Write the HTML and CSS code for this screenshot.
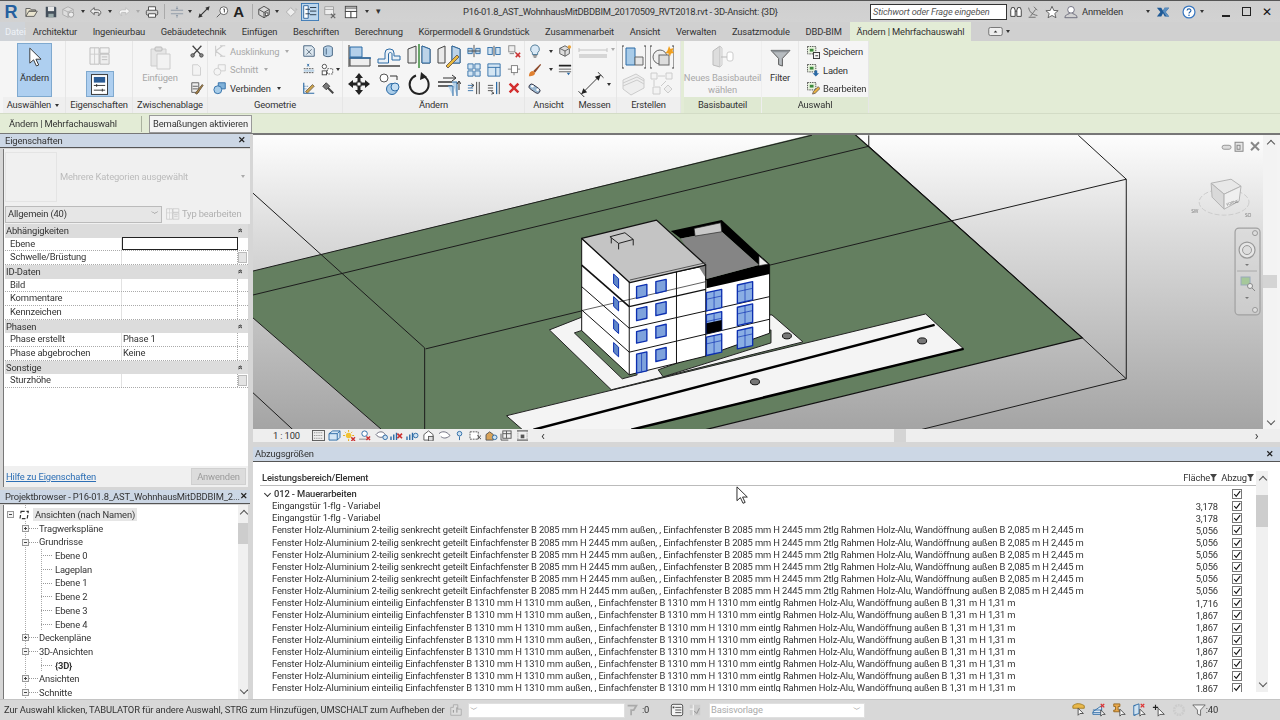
FILE: index.html
```html
<!DOCTYPE html>
<html lang="de">
<head>
<meta charset="utf-8">
<title>Revit</title>
<link rel="stylesheet" href="styles.css">
</head>
<body>
<svg class="sprite" width="0" height="0">
<defs>
<symbol id="open" viewBox="0 0 16 16"><path d="M1 13V4h5l1 1.500h5V7H4.500L1 13h9.500L14 7H4.500" fill="#e9e4cf" stroke="#555"/></symbol>
<symbol id="save" viewBox="0 0 16 16"><path d="M2 2h11l1 1v11H2z" fill="#45505c"/><path d="M4.500 2h7v5h-7z" fill="#e8e8e8"/><path d="M5 10h6v4H5z" fill="#9aa"/></symbol>
<symbol id="sync" viewBox="0 0 16 16"><path d="M2 5l6-3 6 3v6l-6 3-6-3z" fill="#ddd" stroke="#aaa"/><path d="M2 5l6 3 6-3M8 8v6" fill="none" stroke="#aaa"/><circle cx="11.500" cy="11" r="3" fill="#eee" stroke="#999"/></symbol>
<symbol id="undo" viewBox="0 0 16 16"><path d="M6 3 1.500 7 6 11V8.500h4c1.700 0 2.200 2.300.5 3.500 3.800-.5 4.300-6-.5-6.500H6z" fill="#eee" stroke="#555"/></symbol>
<symbol id="redo" viewBox="0 0 16 16"><path d="M10 3l4.500 4L10 11V8.500H6c-1.700 0-2.200 2.300-.5 3.500C1.700 11.500 1.200 6 6 5.500h4z" fill="#f5f5f5" stroke="#bbb"/></symbol>
<symbol id="print" viewBox="0 0 16 16"><path d="M4 6V2h8v4" fill="#fff" stroke="#444"/><rect x="1.500" y="6" width="13" height="5.500" rx="1.500" fill="#d4d4d4" stroke="#444"/><path d="M4 10h8v4H4z" fill="#fff" stroke="#444"/></symbol>
<symbol id="thin" viewBox="0 0 16 16"><path d="M1 6h14M1 10h14M8 1.500v3M8 14.500v-3" stroke="#8a96a4" fill="none"/><path d="M6.500 3.500h3L8 5zM6.500 12.500h3L8 11z" fill="#8a96a4"/></symbol>
<symbol id="meas" viewBox="0 0 16 16"><path d="M3 13 13 3" stroke="#333" stroke-width="1.200"/><path d="M1.500 14.500 3 9.500 6.500 13zM14.500 1.500 13 6.500 9.500 3z" fill="#333"/></symbol>
<symbol id="tagi" viewBox="0 0 16 16"><circle cx="10" cy="6.500" r="4.500" fill="#fff" stroke="#555"/><path d="M6.500 9.500 2 14" stroke="#555"/><path d="M9.500 4.500h1.200v4" fill="none" stroke="#333"/></symbol>
<symbol id="house" viewBox="0 0 16 16"><path d="M8 1.500 14 5v6l-6 3.500L2 11V5z" fill="#d8d8d8" stroke="#444"/><path d="M2 5l6 3.500L14 5M8 8.500v6" fill="none" stroke="#444"/><rect x="9.500" y="9" width="3" height="3" fill="#fff" stroke="#444"/></symbol>
<symbol id="nav" viewBox="0 0 16 16"><path d="M6.500 3 12 8l-5.500 5L1.500 8z" fill="#eee" stroke="#aaa"/><path d="M12 3l2.500 2L12 7z" fill="#bbb"/></symbol>
<symbol id="listb" viewBox="0 0 20 20"><rect x=".5" y=".5" width="19" height="19" fill="#bcd6ee" stroke="#3a78b5"/><path d="M3 3h5v14H3z" fill="#fff" stroke="#2a5f96"/><path d="M10 5h7M10 9h7M10 13h7M5 7l5 0M5 12l5 0" stroke="#234" fill="none"/></symbol>
<symbol id="closew" viewBox="0 0 16 16"><path d="M2 2h10v9H2z" fill="#eee" stroke="#999"/><path d="M2 5h10" stroke="#999"/><path d="M9 10l5 5M14 10l-5 5" stroke="#666" stroke-width="1.300"/></symbol>
<symbol id="wins" viewBox="0 0 16 16"><rect x="1.500" y="1.500" width="13" height="6" fill="#eee" stroke="#444"/><rect x="1.500" y="7.500" width="6.500" height="7" fill="#fff" stroke="#444"/><rect x="8" y="7.500" width="6.500" height="7" fill="#fff" stroke="#444"/><path d="M1.500 3.500h13" stroke="#444"/></symbol>
<symbol id="binoc" viewBox="0 0 16 16"><path d="M2 13V6l1-3h3l1 3v7zM9 13V6l1-3h3l1 3v7z" fill="#fff" stroke="#333"/><path d="M7 7h2" stroke="#333"/></symbol>
<symbol id="sat" viewBox="0 0 16 16"><path d="M3 3c1 5 4 8 10 9" fill="none" stroke="#666"/><path d="M5 13l3-4 3-4M3 14h8" fill="none" stroke="#666"/><path d="M9 2l4 4" stroke="#666"/></symbol>
<symbol id="star" viewBox="0 0 16 16"><path d="M8 1.500 10 6.200l5 .3-3.800 3.200L12.500 14.500 8 12l-4.500 2.500 1.300-4.800L1 6.500l5-.3z" fill="#fff" stroke="#555"/></symbol>
<symbol id="user" viewBox="0 0 16 16"><circle cx="8" cy="5.500" r="3.800" fill="#fff" stroke="#667"/><path d="M1 14.500c0-3 3-4 5-4.500v-1M15 14.500c0-3-3-4-5-4.500v-1M1 14.500h14" fill="none" stroke="#667"/></symbol>
<symbol id="xch" viewBox="0 0 16 16"><path d="M1 3h5l2 3.500L10 3h5l-4 5 4 5h-5L8 9.500 6 13H1l4-5z" fill="#1f5a96"/><path d="M9.500 3h5.500l-4 5 4 5h-3l-4-6z" fill="#5c8fc0"/></symbol>
<symbol id="help" viewBox="0 0 16 16"><circle cx="8" cy="8" r="6.800" fill="#fff" stroke="#3a78c0" stroke-width="1.400"/><path d="M5.800 6.200C6 3.800 10.300 4 10.200 6.300 10.100 8 8 8 8 9.800" fill="none" stroke="#1f5fa8" stroke-width="1.300"/><circle cx="8" cy="11.800" r=".9" fill="#1f5fa8"/></symbol>
<symbol id="panelb" viewBox="0 0 16 10"><rect x=".5" y=".5" width="15" height="9" rx="2" fill="#eee" stroke="#666"/><path d="M6 6l2-2 2 2z" fill="#333"/></symbol>

<symbol id="cursor" viewBox="0 0 16 22"><path d="M3 1v16l4-3.500 3 6.500 2.500-1-3-6.200H15z" fill="#fff" stroke="#333"/></symbol>
<symbol id="cursorb" viewBox="0 0 16 22"><path d="M1 1v16l4-3.500 3 6.500 2.500-1-3-6.200H13z" fill="#fff" stroke="#111"/></symbol>
<symbol id="propg" viewBox="0 0 24 22"><path d="M1 2h10v18H1zM12 2h10v6H12z" fill="#f3f3f3" stroke="#bbb"/><path d="M12 9h10v11H12z" fill="#eee" stroke="#bbb"/><path d="M14 12h6M14 15h6" stroke="#bbb"/><path d="M1 9h10M6 2v18" stroke="#ccc"/></symbol>
<symbol id="propb" viewBox="0 0 18 22"><rect x=".5" y=".5" width="17" height="21" fill="#fff" stroke="#333"/><rect x="3" y="3" width="12" height="6" fill="#2b5c95"/><path d="M3 12h12M3 17h12" stroke="#333"/><path d="M6 10.500v3M12 15.500v3" stroke="#333"/></symbol>
<symbol id="paste" viewBox="0 0 22 24"><path d="M2 3h15v17H2z" fill="#e6e6e6" stroke="#ccc"/><rect x="6" y="1" width="7" height="4" rx="1" fill="#ddd" stroke="#bbb"/><path d="M8 8h13v15H8z" fill="#f2f2f2" stroke="#ccc"/></symbol>
<symbol id="sciss" viewBox="0 0 16 16"><path d="M3 2l10 11M13 2 3 13" stroke="#444" stroke-width="1.500"/><circle cx="3" cy="13" r="2" fill="#888" stroke="#444"/><circle cx="13" cy="13" r="2" fill="#888" stroke="#444"/></symbol>
<symbol id="copyg" viewBox="0 0 16 16"><path d="M3 2h6l3 3v9H3z" fill="#f3f3f3" stroke="#ccc"/></symbol>
<symbol id="match" viewBox="0 0 16 16"><path d="M2 2h8v11H2z" fill="#eee" stroke="#555"/><path d="M3 6h6M3 9h6" stroke="#555"/><path d="M6 14 14 4l1 1-7 10z" fill="#b08a40" stroke="#654"/></symbol>
<symbol id="notch" viewBox="0 0 16 16"><path d="M3 2v12M3 8l8-6M3 8l8 6M8 2h6M8 14h6" fill="none" stroke="#ccc" stroke-width="1.200"/></symbol>
<symbol id="cutg" viewBox="0 0 16 16"><path d="M6 2h8v7H6z" fill="#f4f4f4" stroke="#ccc"/><circle cx="5" cy="10" r="4" fill="#f4f4f4" stroke="#ccc"/></symbol>
<symbol id="join" viewBox="0 0 16 16"><path d="M6 2h8v7H6z" fill="#7fb1d9" stroke="#2b6aa5"/><circle cx="5.500" cy="10" r="4.500" fill="#a7cce8" stroke="#2b6aa5"/></symbol>
<symbol id="g1" viewBox="0 0 16 16"><path d="M2 2h9l3 3v9H2z" fill="#dde7ef" stroke="#3c5a78"/><path d="M5 6l6 6M11 6l-6 6" stroke="#567"/></symbol>
<symbol id="g2" viewBox="0 0 16 16"><path d="M3 4c4-3 8-2 10 0v9c-3 2-7 2-10 0z" fill="#b8d2e8" stroke="#3c5a78"/><path d="M6 5v7" stroke="#3c5a78"/></symbol>
<symbol id="g3" viewBox="0 0 16 16"><path d="M2 11h12M2 6.500h12" stroke="#444" stroke-dasharray="2 1"/><rect x="2" y="7.500" width="12" height="2.500" fill="#bcd3e6"/><path d="M6 1l2 3M8 1 6 4" stroke="#2b6aa5"/></symbol>
<symbol id="g4" viewBox="0 0 16 16"><circle cx="5" cy="4" r="2.500" fill="#fff" stroke="#444"/><rect x="2.500" y="9" width="5" height="4.500" fill="#fff" stroke="#444"/><rect x="8.500" y="6.500" width="6" height="6" fill="#fff" stroke="#555" stroke-dasharray="2 1"/></symbol>
<symbol id="g5" viewBox="0 0 16 16"><path d="M2 2v12h12" fill="none" stroke="#2b6aa5" stroke-width="1.300"/><path d="M4 12 12 4l2 2-8 8z" fill="#c9a24a" stroke="#765"/><path d="M2 6h6M2 9h4" stroke="#2b6aa5" stroke-dasharray="1 1"/></symbol>
<symbol id="g6" viewBox="0 0 16 16"><path d="M2 6l4-4 4 4-4 4z" fill="#777" stroke="#333"/><path d="M8 8l6 6" stroke="#444" stroke-width="2.200"/></symbol>

<symbol id="align" viewBox="0 0 24 24"><path d="M2 1v22" stroke="#333"/><path d="M3 3h12v10H3z" fill="#b4d0ea" stroke="#2b6aa5"/><path d="M3 14h20v8H3z" fill="#eee" stroke="#444"/><path d="M2 14h22" stroke="#2b6aa5" stroke-width="1.500"/></symbol>
<symbol id="offs" viewBox="0 0 24 24"><path d="M1 15h7V9a4 4 0 014-4h1a4 4 0 014 4v3h6v4h-8V10c-.2-2-3-2-3.500 0v9H1z" fill="#eaf1f7" stroke="#2b6aa5"/><path d="M1 22h22" stroke="#444" stroke-width="1.500"/></symbol>
<symbol id="mirr" viewBox="0 0 24 24"><path d="M1 5l8-3v17H1zM15 2l8 3v14h-8z" fill="#eaeaea" stroke="#444"/><path d="M15 2l8 3v14h-8z" fill="#bcd3e8" stroke="#2b6aa5"/><path d="M12 0v24" stroke="#3a8a3a" stroke-width="1.500"/></symbol>
<symbol id="mirp" viewBox="0 0 24 24"><path d="M1 5l7-3v17H1zM15 2l8 3v14h-8z" fill="#eaeaea" stroke="#444"/><path d="M15 2l8 3v14h-8z" fill="#bcd3e8" stroke="#2b6aa5"/><path d="M9 22 20 11l2 2-11 11z" fill="#e8b93f" stroke="#765"/></symbol>
<symbol id="move" viewBox="0 0 24 24"><path d="M12 1l4 5h-2.500v4.500H18V8l5 4-5 4v-2.500h-4.500V18H16l-4 5-4-5h2.500v-4.500H6V16l-5-4 5-4v2.500h4.500V6H8z" fill="#222"/><rect x="10" y="10" width="4" height="4" fill="#fff" stroke="#222"/></symbol>
<symbol id="copy" viewBox="0 0 24 24"><circle cx="7" cy="6" r="4" fill="#fff" stroke="#555"/><circle cx="15" cy="17" r="5.500" fill="#a9cce8" stroke="#2b6aa5"/><circle cx="18" cy="15" r="4" fill="#c5def2" stroke="#2b6aa5"/><path d="M13 4h7v4" fill="none" stroke="#333"/></symbol>
<symbol id="rot" viewBox="0 0 24 24"><path d="M18 5a9.500 9.500 0 11-9-1.500" fill="none" stroke="#222" stroke-width="2"/><path d="M14 0l6 5-7 3z" fill="#222"/></symbol>
<symbol id="trim" viewBox="0 0 24 24"><path d="M1 10h14M1 14h14" stroke="#333" stroke-width="1.300"/><path d="M15 10h5v14M11 14h5v10" fill="#b7d2e8" stroke="#2b6aa5"/><path d="M6 6h12M15 3l4 3-4 3" fill="none" stroke="#333"/><path d="M22 18V10M20 12l2-3 2 3" fill="none" stroke="#333"/></symbol>
<symbol id="m1" viewBox="0 0 16 16"><path d="M1 5h5v6H1zM10 5h5v6h-5z" fill="#bcd7ec" stroke="#2b6aa5"/><path d="M1 8h14M8 1v14" stroke="#444"/></symbol>
<symbol id="m2" viewBox="0 0 16 16"><rect x="1" y="4" width="5" height="8" fill="#cfe2f1" stroke="#2b6aa5"/><rect x="10" y="4" width="5" height="8" fill="#cfe2f1" stroke="#2b6aa5"/><path d="M8 2v12" stroke="#444"/></symbol>
<symbol id="m3" viewBox="0 0 16 16"><path d="M3 3l8 8M3 11h5" stroke="#777"/><rect x="2" y="2" width="7" height="7" fill="#eee" stroke="#888"/><path d="M10 10l5 5M15 10l-5 5" stroke="#c33" stroke-width="1.800"/></symbol>
<symbol id="m4" viewBox="0 0 16 16"><path d="M1 1h6v6H1zM9 1h6v6H9zM1 9h6v6H1zM9 9h6v6H9z" fill="#d3e5f3" stroke="#2b6aa5"/></symbol>
<symbol id="m5" viewBox="0 0 16 16"><path d="M1 1h14v14H1z" fill="#d3e5f3" stroke="#2b6aa5"/><path d="M1 5h14M10 5v10" stroke="#2b6aa5"/></symbol>
<symbol id="m6" viewBox="0 0 16 16"><rect x="5" y="3" width="7" height="8" fill="#fff" stroke="#777"/><path d="M1 7h4M12 7h3M8 11v3" stroke="#777"/></symbol>
<symbol id="m7" viewBox="0 0 16 16"><path d="M1 5h6M1 8h6M1 11h6" stroke="#2b6aa5"/><path d="M5 3l3 2-3 2" fill="none" stroke="#333"/><path d="M11 1v14M14 1v14" stroke="#333"/></symbol>
<symbol id="m8" viewBox="0 0 16 16"><path d="M1 5h6M1 8h6M1 11h6" stroke="#444"/><path d="M11 1v14" stroke="#2b6aa5" stroke-width="1.500"/><path d="M14 1v14" stroke="#333"/><path d="M5 12l3 2-3 1" fill="none" stroke="#333"/></symbol>
<symbol id="delx" viewBox="0 0 16 16"><path d="M2 4l2-2 4 4 4-4 2 2-4 4 4 4-2 2-4-4-4 4-2-2 4-4z" fill="#d32f2f"/></symbol>
<symbol id="bulb" viewBox="0 0 16 16"><path d="M8 1a5 5 0 00-3 9v2h6v-2a5 5 0 00-3-9z" fill="#d8e8f5" stroke="#44718f"/><path d="M5.500 13.500h5M6.500 15h3" stroke="#555"/></symbol>
<symbol id="brush" viewBox="0 0 16 16"><path d="M6 9 14 1l1 1-7 9z" fill="#8c4a2a"/><path d="M1 15c0-4 2-6 5-6l2 2c0 3-3 4-7 4z" fill="#e08030"/></symbol>
<symbol id="hide" viewBox="0 0 16 16"><path d="M2 5l6-3 5 3v6l-5 3-6-3z" fill="#ddd" stroke="#555"/><path d="M2 5l6 3 5-3M8 8v6" fill="none" stroke="#555"/><circle cx="13" cy="3.500" r="2" fill="#e9a23a"/></symbol>
<symbol id="lines" viewBox="0 0 16 16"><path d="M1 3h14" stroke="#222" stroke-width="2"/><path d="M1 7h14M1 10h14" stroke="#555"/><path d="M10 11h4l-2 3z" fill="#2b6aa5"/></symbol>
<symbol id="link" viewBox="0 0 16 16"><rect x="1" y="6" width="14" height="6" rx="3" transform="rotate(35 8 8)" fill="#9bb9d2" stroke="#334"/><circle cx="5" cy="6" r="1.500" fill="#fff"/><circle cx="11" cy="10" r="1.500" fill="#fff"/></symbol>
<symbol id="dimg" viewBox="0 0 30 10"><path d="M1 2h28M1 0v4M29 0v4" stroke="#c4c4c4"/><rect x="1" y="6" width="28" height="4" fill="#d6d6d6"/></symbol>
<symbol id="dimd" viewBox="0 0 26 26"><path d="M3 23 23 3" stroke="#333"/><path d="M0 20l6 6M20 0l6 6" stroke="#333"/><path d="M3 23l2-6 4 4zM23 3l-2 6-4-4z" fill="#222"/></symbol>
<symbol id="cr1" viewBox="0 0 24 24"><path d="M2 1H0v22h2M22 1h2v22h-2" fill="none" stroke="#444"/><path d="M4 3h9v17H4z" fill="#a8cbe8" stroke="#2b6aa5"/><path d="M13 12h8v8h-8z" fill="#e6e6e6" stroke="#666"/></symbol>
<symbol id="cr2" viewBox="0 0 24 24"><path d="M2 1H0v22h2M22 1h2v22h-2" fill="none" stroke="#444"/><circle cx="10" cy="12" r="7" fill="#eee" stroke="#666"/><rect x="9" y="10" width="10" height="10" fill="#ddd" stroke="#666"/><path d="M19 1l1.500 3 3-1-1 3 1.500 2-3 .5-1 3-1.500-3-3-.5 2-2.500z" fill="#f0a020"/></symbol>
<symbol id="cr3" viewBox="0 0 24 24"><path d="M1 8l13-6 8 5v9l-13 7-8-6z" fill="#eee" stroke="#ccc"/><path d="M1 11l14-6 7 4M1 14l14-6 7 4" fill="none" stroke="#ccc"/></symbol>
<symbol id="cr4" viewBox="0 0 24 24"><path d="M1 1h6v6H1zM16 1h6v6h-6zM3 15h7v7H3z" fill="#f3f3f3" stroke="#ccc"/><path d="M8 4h7M4 8v6M16 9l-5 5" stroke="#ccc"/><path d="M18 13l4 4-4 4-4-4z" fill="#eee" stroke="#ccc"/></symbol>
<symbol id="basis" viewBox="0 0 24 24"><path d="M2 6l7-5v21l-7-2z" fill="#ddd" stroke="#bbb"/><path d="M9 1v21l2-2V3z" fill="#eee" stroke="#ccc"/><rect x="16" y="7" width="6" height="9" rx="2" fill="#fff" stroke="#ccc"/><path d="M10 12h6" stroke="#bbb"/></symbol>
<symbol id="funnel" viewBox="0 0 22 20"><path d="M1 2.500h20L13 11v8l-4-1.500V11z" fill="#b7bcc0" stroke="#555"/><path d="M1 2.500h20l-2 2H3z" fill="#8e9499"/></symbol>
<symbol id="sav" viewBox="0 0 14 14"><rect x=".5" y=".5" width="9" height="8" fill="#e7f2dd" stroke="#444" stroke-dasharray="1.500 1"/><rect x="3" y="3" width="4" height="3" fill="#3c8a3c"/><rect x="7" y="7" width="6.500" height="6.500" fill="#f4f4f4" stroke="#333"/><path d="M9 10.500h3" stroke="#333"/></symbol>
<symbol id="lad" viewBox="0 0 14 14"><rect x=".5" y=".5" width="9" height="8" fill="#e7f2dd" stroke="#444" stroke-dasharray="1.500 1"/><rect x="3" y="3" width="4" height="3" fill="#3c8a3c"/><path d="M8 7h3v3h2l-3.500 3.500L6 10h2z" fill="#2b6aa5"/></symbol>
<symbol id="bea" viewBox="0 0 14 14"><rect x=".5" y=".5" width="9" height="8" fill="#e7f2dd" stroke="#444" stroke-dasharray="1.500 1"/><rect x="3" y="3" width="4" height="3" fill="#3c8a3c"/><path d="M6 13l1-3 5-5 2 2-5 5z" fill="#e9b23f" stroke="#765"/></symbol>

<symbol id="v1" viewBox="0 0 14 12"><rect x=".5" y=".5" width="13" height="11" fill="#eee" stroke="#555"/><path d="M2 3h10M2 6h10M2 9h10" stroke="#777" stroke-dasharray="1 1"/></symbol>
<symbol id="v2" viewBox="0 0 14 12"><path d="M1 4l4-3h8v7l-3 3H1z" fill="#d4e6f5" stroke="#2b6aa5"/><path d="M1 4h9v7M10 4l3-3" fill="none" stroke="#2b6aa5"/></symbol>
<symbol id="v3" viewBox="0 0 14 12"><circle cx="6" cy="6" r="3" fill="#f1c232"/><path d="M6 0v2M6 10v2M0 6h2M10 6h2M2 2l1 1M9 9l1 1M10 2 9 3" stroke="#e5a400"/><path d="M9 8l4 4M13 8l-4 4" stroke="#c33" stroke-width="1.500"/></symbol>
<symbol id="v4" viewBox="0 0 14 12"><circle cx="6" cy="4" r="3" fill="#fff" stroke="#2b6aa5"/><path d="M0 10h9" stroke="#888"/><path d="M8 7l4 4M12 7l-4 4" stroke="#c33" stroke-width="1.500"/></symbol>
<symbol id="v5" viewBox="0 0 14 12"><path d="M1 5c3-4 8-4 10 0-2 4-7 4-10 0z" fill="#fff" stroke="#667"/><circle cx="11" cy="8" r="2.500" fill="#cfe2f1" stroke="#2b6aa5"/></symbol>
<symbol id="v6" viewBox="0 0 14 12"><path d="M1 11V7M4 11V5M7 11V3" stroke="#2b6aa5" stroke-width="1.500"/><path d="M8 4l5 5M13 4 8 9" stroke="#c33" stroke-width="1.800"/></symbol>
<symbol id="v7" viewBox="0 0 14 12"><path d="M1 11V7M4 11V5M7 11V3" stroke="#2b6aa5" stroke-width="1.500"/><circle cx="10.500" cy="6" r="2.500" fill="#cfe2f1" stroke="#2b6aa5"/></symbol>
<symbol id="v8" viewBox="0 0 14 12"><path d="M2 5l5-4 5 4v6H2z" fill="#fff" stroke="#555"/><rect x="7" y="7" width="5" height="5" fill="#ddd" stroke="#555"/></symbol>
<symbol id="v9" viewBox="0 0 14 12"><path d="M1 4c3-3 8-3 12 2-4 4-8 3-10 1" fill="#fff" stroke="#667"/></symbol>
<symbol id="v10" viewBox="0 0 14 12"><circle cx="7" cy="4" r="2.500" fill="#cfe2f1" stroke="#2b6aa5"/><path d="M7 7v4" stroke="#2b6aa5"/></symbol>
<symbol id="v11" viewBox="0 0 14 12"><rect x="1" y="2" width="9" height="8" fill="#fff" stroke="#555" stroke-dasharray="2 1"/><path d="M9 6l4 4M13 6l-4 4" stroke="#444"/></symbol>
<symbol id="v12" viewBox="0 0 14 12"><path d="M1 11V5l4-3 4 3v6z" fill="#d8a35a" stroke="#555"/><circle cx="10.500" cy="8" r="2.500" fill="#cfe2f1" stroke="#2b6aa5"/></symbol>
<symbol id="v13" viewBox="0 0 14 12"><rect x="3" y="1" width="9" height="8" fill="#eee" stroke="#555"/><path d="M1 4v7h8M3 4h9M7 1v8" fill="none" stroke="#555"/></symbol>
<symbol id="v14" viewBox="0 0 14 12"><path d="M1 1h12M1 11h12" stroke="#333"/><path d="M2 1v10M12 1v10" stroke="#888" stroke-dasharray="1 1"/><rect x="5" y="5" width="4" height="4" fill="#555"/></symbol>

<symbol id="s1" viewBox="0 0 16 16"><path d="M1 3c4-3 8-3 13 0v3H1z" fill="#e9b84a" stroke="#a07a20"/><path d="M7 6v8l2-2h4z" fill="#fff" stroke="#444"/></symbol>
<symbol id="s2" viewBox="0 0 16 16"><path d="M1 10 11 3v10H1z" fill="#dfeaf4" stroke="#2b6aa5"/><path d="M1 8h10M1 11h10" stroke="#2b6aa5"/><path d="M10 1l4 4M14 1l-4 4" stroke="#d33" stroke-width="1.600"/><path d="M10 8v7l2-2h3z" fill="#fff" stroke="#444"/></symbol>
<symbol id="s3" viewBox="0 0 16 16"><path d="M2 1h7v3H7v4h2v2H2V8h2V4H2z" fill="#e8a84c" stroke="#95651c"/><path d="M9 7v8l2-2h4z" fill="#fff" stroke="#444"/></symbol>
<symbol id="s4" viewBox="0 0 16 16"><path d="M2 3l6-2v11l-6 2z" fill="#cfe2f1" stroke="#2b6aa5"/><path d="M2 3h2M2 14h2" stroke="#2b6aa5"/><path d="M10 1l4 4M14 1l-4 4" stroke="#d33" stroke-width="1.600"/><path d="M9 7v8l2-2h4z" fill="#fff" stroke="#444"/></symbol>
<symbol id="s5" viewBox="0 0 16 16"><path d="M1 5h6M4 2v6" stroke="#222" stroke-width="1.300"/><path d="M7 6v9l2-2h5z" fill="#fff" stroke="#444"/></symbol>
<symbol id="s6" viewBox="0 0 16 16"><circle cx="8" cy="8" r="5.500" fill="none" stroke="#ccc" stroke-width="3" stroke-dasharray="2 1"/></symbol>
<symbol id="s7" viewBox="0 0 18 16"><path d="M1 1.500h16L11 8v7L7 13V8z" fill="#f1f1f1" stroke="#555"/></symbol>
<symbol id="filt" viewBox="0 0 8 8"><path d="M0 0h8L5 4v4H3V4z" fill="#444"/></symbol>
<symbol id="wsh" viewBox="0 0 16 16"><path d="M2 14V5h3V2h5v5h4v7z" fill="#ddd" stroke="#aaa"/><path d="M5 8v3M9 5v6" stroke="#888"/></symbol>
<symbol id="wcnt" viewBox="0 0 16 16"><path d="M3 3h10l-3 5H7v6" fill="none" stroke="#aaa" stroke-width="2"/></symbol>
<symbol id="vis" viewBox="0 0 16 16"><rect x="1.500" y="1.500" width="13" height="13" rx="2" fill="#f4f4f4" stroke="#444"/><path d="M6 5h7M6 8h7M6 11h7" stroke="#444"/><path d="M3 4h2v2H3z" fill="#444"/></symbol>
<symbol id="vorl" viewBox="0 0 16 16"><path d="M2 2h12v12H2z" fill="#ccc"/><path d="M6 2v12M2 7h4" stroke="#fff"/><path d="M7 9l3 3 3-6" stroke="#888" fill="none"/></symbol>
<symbol id="chk" viewBox="0 0 10 10"><path d="M1.500 5 4 8 9 1.500" fill="none" stroke="#111" stroke-width="1.400"/></symbol>

<polygon id="wf" points="0,0 31,-7 31,28 0,35" fill="#7ea2dc" stroke="#0c2fb0" stroke-width="4"/>
<g id="wfd"><polygon points="0,0 31,-7 31,50 0,57" fill="#7ea2dc" stroke="#0c2fb0" stroke-width="4"/><path d="M15 -3V52" stroke="#0c2fb0" stroke-width="2"/></g>
<polygon id="wl" points="0,0 15,14 15,43 0,29" fill="#5f86c8" stroke="#0c2fb0" stroke-width="3"/>
<g id="ww"><polygon points="0,0 46,-10 46,45 0,55" fill="#8aaee4" stroke="#0c2fb0" stroke-width="4"/><path d="M23 -5V50M0 20 46 10" stroke="#0c2fb0" stroke-width="2"/></g>
</defs>
</svg>

<div class="app">
  <header class="titlebar">
    <div class="qat">
      <span class="logo">R</span>
      <svg class="ic"><use href="#open"/></svg>
      <svg class="ic"><use href="#save"/></svg>
      <svg class="ic"><use href="#sync"/></svg>
      <i class="caret"></i>
      <svg class="ic"><use href="#undo"/></svg>
      <i class="caret"></i>
      <svg class="ic"><use href="#redo"/></svg>
      <i class="caret lite"></i>
      <svg class="ic"><use href="#print"/></svg>
      <i class="sep"></i>
      <svg class="ic"><use href="#thin"/></svg>
      <i class="caret"></i>
      <svg class="ic"><use href="#meas"/></svg>
      <svg class="ic"><use href="#tagi"/></svg>
      <span class="big-a">A</span>
      <i class="sep"></i>
      <svg class="ic"><use href="#house"/></svg>
      <i class="caret"></i>
      <svg class="ic"><use href="#nav"/></svg>
      <svg class="ic18"><use href="#listb"/></svg>
      <svg class="ic"><use href="#closew"/></svg>
      <svg class="ic"><use href="#wins"/></svg>
      <i class="caret"></i>
      <span class="cust">▾</span>
    </div>
    <div class="doc-title">P16-01.8_AST_WohnhausMitDBDBIM_20170509_RVT2018.rvt - 3D-Ansicht: {3D}</div>
    <div class="search">Stichwort oder Frage eingeben</div>
    <div class="tools">
      <svg class="ic t-first"><use href="#binoc"/></svg>
      <svg class="ic"><use href="#sat"/></svg>
      <svg class="ic t-star"><use href="#star"/></svg>
      <svg class="ic t-star"><use href="#user"/></svg>
      <span class="signin">Anmelden</span>
      <i class="caret signin-caret"></i>
      <svg class="ic xch"><use href="#xch"/></svg>
      <svg class="ic help"><use href="#help"/></svg>
      <i class="caret help-caret"></i>
    </div>
    <div class="winbtns">
      <span class="wmin"></span>
      <span class="wmax"></span>
      <span class="wclose">✕</span>
    </div>
  </header>

  <nav class="tabs">
    <span class="tab datei">Datei</span>
    <span class="tab">Architektur</span>
    <span class="tab">Ingenieurbau</span>
    <span class="tab">Gebäudetechnik</span>
    <span class="tab">Einfügen</span>
    <span class="tab">Beschriften</span>
    <span class="tab">Berechnung</span>
    <span class="tab">Körpermodell &amp; Grundstück</span>
    <span class="tab">Zusammenarbeit</span>
    <span class="tab">Ansicht</span>
    <span class="tab">Verwalten</span>
    <span class="tab">Zusatzmodule</span>
    <span class="tab">DBD-BIM</span>
    <span class="tab active">Ändern | Mehrfachauswahl</span>
    <svg class="panelb"><use href="#panelb"/></svg>
    <i class="caret"></i>
  </nav>

  <section class="ribbon">
    <div class="panel p-select">
      <div class="pbody">
        <div class="bigbtn"><svg class="cur"><use href="#cursor"/></svg><span>Ändern</span></div>
      </div>
      <div class="plabel">Auswählen <i class="caret"></i></div>
    </div>
    <div class="panel p-props">
      <div class="pbody">
        <svg class="propg"><use href="#propg"/></svg>
        <div class="propbtn"><svg class="propb"><use href="#propb"/></svg></div>
      </div>
      <div class="plabel">Eigenschaften</div>
    </div>
    <div class="panel p-clip">
      <div class="pbody">
        <div class="pastecol">
          <svg class="paste"><use href="#paste"/></svg>
          <span class="dis">Einfügen</span>
          <i class="caret lite"></i>
        </div>
        <div class="smallcol">
          <svg class="ic"><use href="#sciss"/></svg>
          <svg class="ic"><use href="#copyg"/></svg>
          <svg class="ic"><use href="#match"/></svg>
        </div>
      </div>
      <div class="plabel">Zwischenablage</div>
    </div>
    <div class="panel p-geo">
      <div class="pbody">
        <div class="geolist">
          <div class="geoitem dis"><svg class="ic"><use href="#notch"/></svg>Ausklinkung<i class="caret lite"></i></div>
          <div class="geoitem dis"><svg class="ic"><use href="#cutg"/></svg>Schnitt<i class="caret lite"></i></div>
          <div class="geoitem"><svg class="ic"><use href="#join"/></svg>Verbinden<i class="caret"></i></div>
        </div>
        <div class="geogrid">
          <svg class="ic"><use href="#g1"/></svg><svg class="ic"><use href="#g2"/></svg>
          <svg class="ic"><use href="#g3"/></svg><span class="with-caret"><svg class="ic"><use href="#g4"/></svg><i class="caret"></i></span>
          <svg class="ic"><use href="#g5"/></svg><svg class="ic"><use href="#g6"/></svg>
        </div>
      </div>
      <div class="plabel">Geometrie</div>
    </div>
    <div class="panel p-mod">
      <div class="pbody">
        <div class="modbig">
          <svg class="ic24"><use href="#align"/></svg><svg class="ic24"><use href="#offs"/></svg><svg class="ic24"><use href="#mirr"/></svg><svg class="ic24"><use href="#mirp"/></svg>
          <svg class="ic24"><use href="#move"/></svg><svg class="ic24"><use href="#copy"/></svg><svg class="ic24"><use href="#rot"/></svg><svg class="ic24"><use href="#trim"/></svg>
        </div>
        <div class="modsmall">
          <svg class="ic"><use href="#m1"/></svg><svg class="ic"><use href="#m2"/></svg><svg class="ic"><use href="#m3"/></svg>
          <svg class="ic"><use href="#m4"/></svg><svg class="ic"><use href="#m5"/></svg><svg class="ic"><use href="#m6"/></svg>
          <svg class="ic"><use href="#m7"/></svg><svg class="ic"><use href="#m8"/></svg><svg class="ic"><use href="#delx"/></svg>
        </div>
      </div>
      <div class="plabel">Ändern</div>
    </div>
    <div class="panel p-view">
      <div class="pbody">
        <div class="viewgrid">
          <svg class="ic"><use href="#bulb"/></svg><i class="caret"></i><svg class="ic"><use href="#hide"/></svg>
          <svg class="ic"><use href="#brush"/></svg><i class="caret"></i><svg class="ic"><use href="#lines"/></svg>
          <svg class="ic"><use href="#link"/></svg>
        </div>
      </div>
      <div class="plabel">Ansicht</div>
    </div>
    <div class="panel p-meas">
      <div class="pbody">
        <div class="measrow top"><svg class="dimg"><use href="#dimg"/></svg><i class="caret lite"></i></div>
        <div class="measrow"><svg class="dimd"><use href="#dimd"/></svg><i class="caret"></i></div>
      </div>
      <div class="plabel">Messen</div>
    </div>
    <div class="panel p-create">
      <div class="pbody">
        <svg class="ic24"><use href="#cr1"/></svg><svg class="ic24"><use href="#cr2"/></svg>
        <svg class="ic24"><use href="#cr3"/></svg><svg class="ic24"><use href="#cr4"/></svg>
      </div>
      <div class="plabel">Erstellen</div>
    </div>
    <div class="panel p-basis ctx">
      <div class="pbody">
        <svg class="ic24"><use href="#basis"/></svg>
        <span class="dis">Neues Basisbauteil<br>wählen</span>
      </div>
      <div class="plabel">Basisbauteil</div>
    </div>
    <div class="panel p-sel ctx">
      <div class="pbody">
        <div class="filter"><svg class="funnel"><use href="#funnel"/></svg><span>Filter</span></div>
        <div class="sellist">
          <div><svg class="ic13"><use href="#sav"/></svg>Speichern</div>
          <div><svg class="ic13"><use href="#lad"/></svg>Laden</div>
          <div><svg class="ic13"><use href="#bea"/></svg>Bearbeiten</div>
        </div>
      </div>
      <div class="plabel">Auswahl</div>
    </div>
  </section>

  <section class="options">
    <span class="opt-name">Ändern | Mehrfachauswahl</span>
    <i class="opt-sep"></i>
    <span class="opt-btn">Bemaßungen aktivieren</span>
  </section>

  <main class="main">
    <aside class="left">
      <section class="props">
        <div class="phead"><span>Eigenschaften</span><b>✕</b></div>
        <div class="typesel"><div class="thumb"></div><span>Mehrere Kategorien ausgewählt</span><i class="caret lite"></i></div>
        <div class="inst">
          <div class="instsel">Allgemein (40)<em>﹀</em></div>
          <div class="typebtn"><svg class="ic"><use href="#propg"/></svg>Typ bearbeiten</div>
        </div>
        <div class="ptable">
          <div class="grp">Abhängigkeiten<b>»</b></div>
          <div class="pr"><span>Ebene</span><span class="sel"></span><i></i></div>
          <div class="pr"><span>Schwelle/Brüstung</span><span></span><i class="thumbv"></i></div>
          <div class="grp">ID-Daten<b>»</b></div>
          <div class="pr"><span>Bild</span><span></span><i></i></div>
          <div class="pr"><span>Kommentare</span><span></span><i></i></div>
          <div class="pr"><span>Kennzeichen</span><span></span><i></i></div>
          <div class="grp">Phasen<b>»</b></div>
          <div class="pr"><span>Phase erstellt</span><span>Phase 1</span><i></i></div>
          <div class="pr"><span>Phase abgebrochen</span><span>Keine</span><i></i></div>
          <div class="grp">Sonstige<b>»</b></div>
          <div class="pr"><span>Sturzhöhe</span><span></span><i class="thumbv"></i></div>
        </div>
        <div class="pfoot"><a>Hilfe zu Eigenschaften</a><span class="apply">Anwenden</span></div>
      </section>
      <section class="browser">
        <div class="phead"><span>Projektbrowser - P16-01.8_AST_WohnhausMitDBDBIM_2...</span><b>✕</b></div>
        <div class="bbody">
          <div class="tree">
            <div class="tr root"><i class="exp minus"></i><svg class="rooticon" viewBox="0 0 10 10"><rect x="2" y="2" width="6" height="6" transform="skewX(-8)" fill="none" stroke="#333" stroke-dasharray="3 1.500"/></svg><span class="hl">Ansichten (nach Namen)</span></div>
            <div class="tr l1"><i class="exp plus"></i><i class="elb"></i>Tragwerkspläne</div>
            <div class="tr l1"><i class="exp minus"></i><i class="elb"></i>Grundrisse</div>
            <div class="sub">
              <div class="tr l2"><i class="elb"></i>Ebene 0</div>
              <div class="tr l2"><i class="elb"></i>Lageplan</div>
              <div class="tr l2"><i class="elb"></i>Ebene 1</div>
              <div class="tr l2"><i class="elb"></i>Ebene 2</div>
              <div class="tr l2"><i class="elb"></i>Ebene 3</div>
              <div class="tr l2"><i class="elb"></i>Ebene 4</div>
            </div>
            <div class="tr l1"><i class="exp plus"></i><i class="elb"></i>Deckenpläne</div>
            <div class="tr l1"><i class="exp minus"></i><i class="elb"></i>3D-Ansichten</div>
            <div class="sub">
              <div class="tr l2 cur3d"><i class="elb"></i>{3D}</div>
            </div>
            <div class="tr l1"><i class="exp plus"></i><i class="elb"></i>Ansichten</div>
            <div class="tr l1"><i class="exp minus"></i><i class="elb"></i>Schnitte</div>
          </div>
          <div class="vbar"><span class="up"></span><span class="th tb"></span><span class="down"></span></div>
        </div>
      </section>
    </aside>

    <section class="right">
      <div class="viewrow">
        <svg class="canvas" viewBox="0 0 1012 295" width="1010" height="295">
          <defs>
            <linearGradient id="bg" x1="0" y1="0" x2="0" y2="1"><stop offset="0" stop-color="#fdfdfd"/><stop offset=".33" stop-color="#dcdcdc"/><stop offset="1" stop-color="#a4a4a4"/></linearGradient>
          </defs>
          <rect width="1012" height="295" fill="url(#bg)"/>
          <polygon points="0,136 560,-1 603,-1 831,203 453,295 129,295 0,183" fill="#647f60"/>
          <g fill="none" stroke="#1c1c1c" stroke-width="1">
            <path d="M0 136 560 0"/>
            <path d="M0 58 172 213V295"/>
            <path d="M173 214 703 85 875 44"/>
            <path d="M0 160 617 11"/>
            <path d="M617 0V11L831 203 875 244V44L827 0"/>
            <path d="M875 244 669 295"/>
            <path d="M0 258 40 295"/>
            <path d="M0 183 129 295"/>
          </g>
          <path d="M603 -1 831 203 453 295" fill="none" stroke="#111" stroke-width="1.200"/>
          <polygon points="254,281 674,179 712,214 379,295 270,295" fill="#f4f4f4" stroke="#222"/>
          <path d="M281 295 683 190" stroke="#000" stroke-width="2.500"/>
          <path d="M379 295 712 214" stroke="#000" stroke-width="2.500"/>
          <polygon points="297,195 330,182 520,180 551,207 359,255" fill="#f4f4f4" stroke="#222"/>
          <polygon points="322,198 370,244 385,240 340,192" fill="#647f60" stroke="#222"/>
          <polygon points="406,235 411,242 519,208 519,195" fill="#647f60" stroke="#222"/>
          <ellipse cx="503" cy="247" rx="4.500" ry="3" fill="#777" stroke="#111"/>
          <ellipse cx="670.500" cy="206" rx="4.500" ry="3" fill="#777" stroke="#111"/>
          <ellipse cx="535" cy="201" rx="4.500" ry="3" fill="#777" stroke="#111"/>

          <g transform="translate(247 65) scale(.3333)" stroke-linejoin="round">
            <polygon points="247,115 390,245 620,197 620,240 812,195 812,400 615,470 390,525 247,392" fill="#fff" stroke="#111" stroke-width="3"/>
            <polygon points="515,93 668,60 812,192 812,222 622,265 622,237 780,195 665,92 545,115" fill="#000"/>
            <polygon points="545,115 665,92 780,195 622,237" fill="#858585"/>
            <polygon points="585,85 665,68 668,95 588,108" fill="#c9c9c9" stroke="#222" stroke-width="2"/>
            <polygon points="780,168 808,192 780,197" fill="#eee" stroke="#333" stroke-width="2"/>
            <polygon points="247,115 472,60 620,195 392,248" fill="#c4c4c4" stroke="#111" stroke-width="4"/>
            <path d="M392 240 620 188" stroke="#555" stroke-width="3"/>
            <polygon points="332,110 377,98 402,118 358,130" fill="#c9c9c9" stroke="#222" stroke-width="3"/>
            <path d="M336 113V130M402 118V136M358 130V148" stroke="#222" stroke-width="3" fill="none"/>
            <g fill="none" stroke="#111">
              <path d="M247 195 390 320" stroke-width="5"/>
              <path d="M247 260 390 385M247 330 390 457" stroke-width="3"/>
              <path d="M390 320 620 268" stroke-width="4"/>
              <path d="M390 385 812 290M390 457 812 358" stroke-width="3"/>
              <path d="M247 332 620 245" stroke-width="2"/>
              <path d="M390 245V525M532 215V490M620 197V470" stroke-width="3"/>
            </g>
            <use href="#wl" x="343" y="222"/><use href="#wl" x="343" y="290"/><use href="#wl" x="343" y="358"/><use href="#wl" x="343" y="428"/>
            <use href="#wf" x="412" y="260"/><use href="#wf" x="412" y="327"/><use href="#wf" x="412" y="395"/><use href="#wfd" x="412" y="463"/>
            <use href="#wf" x="470" y="245"/><use href="#wf" x="470" y="312"/><use href="#wf" x="470" y="380"/><use href="#wf" x="470" y="450"/>
            <use href="#ww" x="622" y="278"/><use href="#ww" x="622" y="345"/><use href="#ww" x="622" y="412"/>
            <polygon points="622,370 668,360 668,392 622,402" fill="#000"/>
            <use href="#ww" x="715" y="255"/><use href="#ww" x="715" y="322"/><use href="#ww" x="715" y="392"/>
          </g>

          <g class="vctl">
            <rect x="971" y="10" width="9" height="4" rx="2" fill="#ddd" stroke="#999"/>
            <rect x="984" y="7" width="8" height="9" fill="#e6e6e6" stroke="#888"/><rect x="986" y="10" width="3" height="4" fill="none" stroke="#888"/>
            <path d="M1000 7l8 8M1008 7l-8 8" stroke="#888" stroke-width="2"/>
          </g>
          <g class="vcube">
            <ellipse cx="973" cy="67" rx="25" ry="13" fill="none" stroke="#ccc" stroke-width="1" stroke-dasharray="5 2"/>
            <polygon points="960,48 980,44 990,51 973,59" fill="#e8e8e8" stroke="#b4b4b4"/>
            <polygon points="960,48 973,59 973,74 961,62" fill="#d9d9d9" stroke="#b4b4b4"/>
            <polygon points="973,59 990,51 988,66 973,74" fill="#efefef" stroke="#b4b4b4"/>
            <text x="974" y="69" font-size="4" transform="rotate(-18 981 65)">VORNE</text>
            <text x="940" y="78" font-size="5" fill="#aaa">SW</text>
            <text x="994" y="82" font-size="5" fill="#aaa">SO</text>
          </g>
          <g class="navbar">
            <rect x="984" y="93" width="25" height="87" rx="4" fill="#dadada" fill-opacity=".35" stroke="#a0a0a0" stroke-width="1.200"/>
            <circle cx="1004" cy="98" r="2.500" fill="#ddd" stroke="#999"/>
            <circle cx="1004" cy="175" r="2.500" fill="#ddd" stroke="#999"/>
            <circle cx="996" cy="115" r="8" fill="#e6e6e6" stroke="#999" stroke-width="1.200"/>
            <circle cx="996" cy="115" r="4.500" fill="#ddd" stroke="#999"/>
            <path d="M994 129h4l-2 2z" fill="#777"/>
            <path d="M986 136h20" stroke="#aaa"/>
            <rect x="990" y="142" width="9" height="8" fill="#a6c89a" stroke="#9ab"/>
            <circle cx="999" cy="151" r="2.500" fill="#eee" stroke="#888"/><path d="M1001 153l3 3" stroke="#888"/>
            <path d="M994 162h4l-2 2z" fill="#777"/>
          </g>
        </svg>
        <div class="vvbar"><span class="up"></span><span class="th tv"></span><span class="down"></span></div>
      </div>
      <div class="viewbar">
        <span class="scale">1 : 100</span>
        <div class="vicons">
          <svg class="vi"><use href="#v1"/></svg><svg class="vi"><use href="#v2"/></svg><svg class="vi"><use href="#v3"/></svg><svg class="vi"><use href="#v4"/></svg><svg class="vi"><use href="#v5"/></svg><svg class="vi"><use href="#v6"/></svg><svg class="vi"><use href="#v7"/></svg><svg class="vi"><use href="#v8"/></svg><svg class="vi"><use href="#v9"/></svg><svg class="vi"><use href="#v10"/></svg><svg class="vi"><use href="#v11"/></svg><svg class="vi"><use href="#v12"/></svg><svg class="vi"><use href="#v13"/></svg><svg class="vi"><use href="#v14"/></svg>
        </div>
        <span class="lt">‹</span>
        <div class="hthumb"></div>
        <span class="rt">›</span>
      </div>
      <div class="abz">
        <div class="abzhead"><span>Abzugsgrößen</span><b>✕</b></div>
        <div class="abzbody">
          <div class="tablewrap">
            <div class="thead">
              <span class="tname">Leistungsbereich/Element</span>
              <span class="thf">Fläche<svg class="fi"><use href="#filt"/></svg></span>
              <span class="tha">Abzug<svg class="fi"><use href="#filt"/></svg></span>
            </div>
            <div class="tbody">
              <div class="r group"><span class="n"><i class="chev"></i>012 - Mauerarbeiten</span><span class="f"></span><span class="c"><svg><use href="#chk"/></svg></span></div>
              <div class="r"><span class="n">Eingangstür 1-flg - Variabel</span><span class="f">3,178</span><span class="c"><svg><use href="#chk"/></svg></span></div>
              <div class="r"><span class="n">Eingangstür 1-flg - Variabel</span><span class="f">3,178</span><span class="c"><svg><use href="#chk"/></svg></span></div>
              <div class="r"><span class="n">Fenster Holz-Aluminium 2-teilig senkrecht geteilt Einfachfenster B 2085 mm H 2445 mm außen, , Einfachfenster B 2085 mm H 2445 mm 2tlg Rahmen Holz-Alu, Wandöffnung außen B 2,085 m H 2,445 m</span><span class="f">5,056</span><span class="c"><svg><use href="#chk"/></svg></span></div>
              <div class="r"><span class="n">Fenster Holz-Aluminium 2-teilig senkrecht geteilt Einfachfenster B 2085 mm H 2445 mm außen, , Einfachfenster B 2085 mm H 2445 mm 2tlg Rahmen Holz-Alu, Wandöffnung außen B 2,085 m H 2,445 m</span><span class="f">5,056</span><span class="c"><svg><use href="#chk"/></svg></span></div>
              <div class="r"><span class="n">Fenster Holz-Aluminium 2-teilig senkrecht geteilt Einfachfenster B 2085 mm H 2445 mm außen, , Einfachfenster B 2085 mm H 2445 mm 2tlg Rahmen Holz-Alu, Wandöffnung außen B 2,085 m H 2,445 m</span><span class="f">5,056</span><span class="c"><svg><use href="#chk"/></svg></span></div>
              <div class="r"><span class="n">Fenster Holz-Aluminium 2-teilig senkrecht geteilt Einfachfenster B 2085 mm H 2445 mm außen, , Einfachfenster B 2085 mm H 2445 mm 2tlg Rahmen Holz-Alu, Wandöffnung außen B 2,085 m H 2,445 m</span><span class="f">5,056</span><span class="c"><svg><use href="#chk"/></svg></span></div>
              <div class="r"><span class="n">Fenster Holz-Aluminium 2-teilig senkrecht geteilt Einfachfenster B 2085 mm H 2445 mm außen, , Einfachfenster B 2085 mm H 2445 mm 2tlg Rahmen Holz-Alu, Wandöffnung außen B 2,085 m H 2,445 m</span><span class="f">5,056</span><span class="c"><svg><use href="#chk"/></svg></span></div>
              <div class="r"><span class="n">Fenster Holz-Aluminium 2-teilig senkrecht geteilt Einfachfenster B 2085 mm H 2445 mm außen, , Einfachfenster B 2085 mm H 2445 mm 2tlg Rahmen Holz-Alu, Wandöffnung außen B 2,085 m H 2,445 m</span><span class="f">5,056</span><span class="c"><svg><use href="#chk"/></svg></span></div>
              <div class="r"><span class="n">Fenster Holz-Aluminium einteilig Einfachfenster B 1310 mm H 1310 mm außen, , Einfachfenster B 1310 mm H 1310 mm eintlg Rahmen Holz-Alu, Wandöffnung außen B 1,31 m H 1,31 m</span><span class="f">1,716</span><span class="c"><svg><use href="#chk"/></svg></span></div>
              <div class="r"><span class="n">Fenster Holz-Aluminium einteilig Einfachfenster B 1310 mm H 1310 mm außen, , Einfachfenster B 1310 mm H 1310 mm eintlg Rahmen Holz-Alu, Wandöffnung außen B 1,31 m H 1,31 m</span><span class="f">1,867</span><span class="c"><svg><use href="#chk"/></svg></span></div>
              <div class="r"><span class="n">Fenster Holz-Aluminium einteilig Einfachfenster B 1310 mm H 1310 mm außen, , Einfachfenster B 1310 mm H 1310 mm eintlg Rahmen Holz-Alu, Wandöffnung außen B 1,31 m H 1,31 m</span><span class="f">1,867</span><span class="c"><svg><use href="#chk"/></svg></span></div>
              <div class="r"><span class="n">Fenster Holz-Aluminium einteilig Einfachfenster B 1310 mm H 1310 mm außen, , Einfachfenster B 1310 mm H 1310 mm eintlg Rahmen Holz-Alu, Wandöffnung außen B 1,31 m H 1,31 m</span><span class="f">1,867</span><span class="c"><svg><use href="#chk"/></svg></span></div>
              <div class="r"><span class="n">Fenster Holz-Aluminium einteilig Einfachfenster B 1310 mm H 1310 mm außen, , Einfachfenster B 1310 mm H 1310 mm eintlg Rahmen Holz-Alu, Wandöffnung außen B 1,31 m H 1,31 m</span><span class="f">1,867</span><span class="c"><svg><use href="#chk"/></svg></span></div>
              <div class="r"><span class="n">Fenster Holz-Aluminium einteilig Einfachfenster B 1310 mm H 1310 mm außen, , Einfachfenster B 1310 mm H 1310 mm eintlg Rahmen Holz-Alu, Wandöffnung außen B 1,31 m H 1,31 m</span><span class="f">1,867</span><span class="c"><svg><use href="#chk"/></svg></span></div>
              <div class="r"><span class="n">Fenster Holz-Aluminium einteilig Einfachfenster B 1310 mm H 1310 mm außen, , Einfachfenster B 1310 mm H 1310 mm eintlg Rahmen Holz-Alu, Wandöffnung außen B 1,31 m H 1,31 m</span><span class="f">1,867</span><span class="c"><svg><use href="#chk"/></svg></span></div>
              <div class="r"><span class="n">Fenster Holz-Aluminium einteilig Einfachfenster B 1310 mm H 1310 mm außen, , Einfachfenster B 1310 mm H 1310 mm eintlg Rahmen Holz-Alu, Wandöffnung außen B 1,31 m H 1,31 m</span><span class="f">1,867</span><span class="c"><svg><use href="#chk"/></svg></span></div>
            </div>
            <svg class="mouse"><use href="#cursorb"/></svg>
          </div>
          <div class="tvbar"><span class="up"></span><span class="th tt"></span><span class="down"></span></div>
        </div>
      </div>
    </section>
  </main>

  <footer class="status">
    <span class="stext">Zur Auswahl klicken, TABULATOR für andere Auswahl, STRG zum Hinzufügen, UMSCHALT zum Aufheben der</span>
    <svg class="ic st-ws"><use href="#wsh"/></svg>
    <div class="combo c1"><em>﹀</em></div>
    <svg class="ic st-cnt"><use href="#wcnt"/></svg>
    <span class="zero">:0</span>
    <svg class="ic st-vis"><use href="#vis"/></svg>
    <svg class="ic st-vorl"><use href="#vorl"/></svg>
    <div class="combo c2">Basisvorlage<em>﹀</em></div>
    <div class="st-right">
      <svg class="ic"><use href="#s1"/></svg>
      <svg class="ic"><use href="#s2"/></svg>
      <svg class="ic"><use href="#s3"/></svg>
      <svg class="ic"><use href="#s4"/></svg>
      <svg class="ic"><use href="#s5"/></svg>
      <svg class="ic"><use href="#s6"/></svg>
      <svg class="ic"><use href="#s7"/></svg>
      <span class="forty">:40</span>
    </div>
  </footer>
</div>
</body>
</html>
```
FILE: styles.css
```css
*{box-sizing:border-box}
html,body{margin:0;padding:0;background:#d4d4d4}
.sprite{display:block;height:0;width:0;overflow:hidden}
.app{width:1280px;height:720px;overflow:hidden;display:grid;grid-template-rows:22px 19px 72px 21px 565px 21px;
  font:9.400px/1 Roboto,"Open Sans",sans-serif;letter-spacing:-.15px;color:#333;filter:blur(.35px)}
svg{display:block}
i,em,b{font-style:normal}
.ic{width:14px;height:14px;flex:none}
.ic13{width:13px;height:13px;flex:none}
.ic18{width:18px;height:18px}
.ic24{width:24px;height:24px}
.caret{display:inline-block;width:0;height:0;border:2.500px solid transparent;border-top:3px solid #333;border-bottom:0;flex:none}
.caret.lite{border-top-color:#aaa}
.dis{color:#a8a8a8}

/* title */
.titlebar{display:flex;align-items:center;background:linear-gradient(#cfcfcf,#d2d2d2);border-top:1px solid #555}
.qat{display:grid;grid-template-columns:22px 20px 18px 16px 13px 14px 14px 13px 15px 14px 11px 13px 13px 16px 19px 15px 12px 12px 14px 16px 20px 20px 21px 12px 10px;align-items:center;justify-items:center;width:380px;flex:none}
.logo{font:bold 18px/1 "Liberation Sans",sans-serif;color:#25609f}
.big-a{font:bold 15px/1 "Liberation Sans",sans-serif;color:#222}
.sep{width:1px;height:15px;background:#aaa}
.cust{font-size:9px;color:#333}
.doc-title{margin-left:83px;width:407px;white-space:nowrap;flex:none;letter-spacing:-.26px}
.search{width:137px;height:16px;background:#fff;border:1px solid #333;font-style:italic;font-size:9.200px;line-height:14px;padding-left:2px;color:#555;white-space:nowrap;overflow:hidden;flex:none}
.tools{display:flex;align-items:center;margin-left:2px;flex:none}
.tools .ic{margin-left:3px}
.tools .t-first{margin-left:0}
.tools .t-star{margin-left:5px}
.signin{margin-left:4px;width:42px;white-space:nowrap}
.signin-caret{margin-left:22px}
.tools .xch{margin-left:6px}
.tools .help{margin-left:12px}
.help-caret{margin-left:4px}
.winbtns{display:flex;align-items:center;margin-left:18px;gap:11px;flex:none}
.wmin{width:8px;height:2px;background:#222;margin-top:8px}
.wmax{width:9px;height:9px;border:1px solid #222;margin-left:1px}
.wclose{font-size:12px;color:#111}

/* tabs */
.tabs{display:flex;align-items:center;background:#d0d0d0;white-space:nowrap}
.tab{padding:0 7.850px;line-height:19px;height:19px}
.tabs .datei{width:25px;padding:0 0 0 5px;color:#eef2f7;background:#cfd3d8}
.tab.active{background:#e3ecd6;padding:0 7px}
.panelb{width:15px;height:9px;margin-left:17px}
.tabs .caret{margin-left:3px}

/* ribbon */
.ribbon{display:grid;grid-template-columns:66px 67px 75px 135px 182px 48px 44px 64px 81px 107px 1fr;background:#e3ecd6;grid-template-rows:72px}
.panel{display:grid;grid-template-rows:56px 16px;background:#f5f5f5;border-right:1px solid #e6e6e6;min-width:0}
.plabel{background:#efefef;text-align:center;line-height:16px;white-space:nowrap}
.ctx .plabel{background:#dfe9d2}
.pbody{min-width:0}
.p-select{padding-left:3px}
.p-select .pbody{padding:2px 0 0 14px}
.bigbtn{width:35px;height:54px;background:#aecff0;border:1px solid #7fa9cf;display:flex;flex-direction:column;align-items:center;padding-top:3px}
.cur{width:15px;height:21px;margin-bottom:5px}
.p-select .plabel{padding-right:2px}
.p-select .caret{margin-left:2px;vertical-align:middle}
.p-props .pbody{display:flex;flex-direction:column;align-items:center;padding-top:5px;padding-left:1px}
.propg{width:24px;height:20px}
.propbtn{margin-top:5px;width:28px;height:26px;background:#aecff0;border:1px solid #7fa9cf;display:flex;align-items:center;justify-content:center}
.propb{width:17px;height:21px}
.p-clip .pbody{display:grid;grid-template-columns:54px 20px;}
.pastecol{display:flex;flex-direction:column;align-items:center;padding-top:5px}
.paste{width:22px;height:24px;margin-bottom:3px}
.pastecol .caret{margin-top:5px}
.smallcol{display:grid;grid-template-rows:repeat(3,18.500px);align-items:center;justify-items:center;padding-top:1px}
.p-geo .pbody{display:grid;grid-template-columns:86px 39px;padding-left:5px;padding-top:1px}
.geolist{display:grid;grid-template-rows:repeat(3,18.500px)}
.geoitem{display:flex;align-items:center;gap:2px;white-space:nowrap}
.geoitem .ic{margin-right:1px}
.geoitem .caret{margin-left:4px}
.geogrid{display:grid;grid-template-columns:19px 20px;grid-template-rows:repeat(3,18.500px);align-items:center;justify-items:center}
.with-caret{display:flex;align-items:center;gap:2px;margin-left:4px}
.p-mod .pbody{display:grid;grid-template-columns:120px 60px;padding-left:1px}
.modbig{display:grid;grid-template-columns:repeat(4,30px);grid-template-rows:28px 28px;align-items:center;justify-items:center;padding-top:1px}
.modsmall{display:grid;grid-template-columns:repeat(3,20px);grid-template-rows:repeat(3,18.500px);align-items:center;justify-items:center;padding-top:1px}
.viewgrid{display:grid;grid-template-columns:20px 12px 16px;grid-template-rows:repeat(3,18.500px);align-items:center;justify-items:center;padding-top:1px}
.p-meas .pbody{display:flex;flex-direction:column;padding:7px 0 0 5px}
.measrow{display:flex;align-items:center;gap:3px}
.measrow.top{height:24px;align-items:flex-start}
.dimg{width:30px;height:10px}
.dimd{width:26px;height:25px}
.p-create .pbody{display:grid;grid-template-columns:28px 28px;grid-template-rows:27px 27px;align-items:center;justify-items:center;padding:2px 0 0 3px}
.p-basis{margin-left:3px;width:78px;border-right-color:#eee}
.p-basis .pbody{display:flex;flex-direction:column;align-items:center;padding-top:4px;text-align:center;line-height:12px}
.p-basis .pbody span{white-space:nowrap;margin-top:3px}
.p-sel{width:107px}
.p-sel .pbody{display:flex}
.filter{width:37px;display:flex;flex-direction:column;align-items:center;padding-top:7px;border-right:1px solid #e8e8e8}
.funnel{width:21px;height:19px;margin-bottom:6px}
.sellist{display:grid;grid-template-rows:repeat(3,18.300px);padding:2px 0 0 8px}
.sellist div{display:flex;align-items:center;gap:3px;white-space:nowrap}

/* options */
.options{display:flex;align-items:center;background:#e3ecd6;border-top:1px solid #d3dcc6;border-bottom:1px solid #777;height:21px}
.opt-name{margin-left:9px;width:132px;white-space:nowrap}
.opt-sep{width:1px;height:16px;background:#aab29f}
.opt-btn{margin-left:7px;height:18px;width:103px;line-height:16px;text-align:center;background:#f4f4f4;border:1px solid #999;white-space:nowrap;box-shadow:0 1px 0 #777}

/* main */
.main{display:grid;grid-template-columns:253px 1027px;min-height:0}
.left{display:grid;grid-template-columns:minmax(0,1fr);grid-template-rows:356px minmax(0,1fr);background:#d6d6d6;min-height:0;min-width:0}
.phead{display:flex;justify-content:space-between;align-items:center;height:13px;background:#ccd7e5;padding:0 4px 0 5px;margin-right:3px;border-bottom:1px solid #555;box-sizing:content-box;white-space:nowrap}
.phead b{font-size:9px;font-weight:700;color:#222}
.props{display:flex;flex-direction:column;background:#d6d6d6;padding-bottom:3px;min-width:0}
.typesel{margin:1px 3px 0 3px;height:55px;background:#f0f0f0;border-left:1px solid #777;display:flex;align-items:center;color:#bbb;white-space:nowrap;flex:none}
.thumb{width:52px;height:50px;margin:0 3px 0 1px;border:1px solid #e4e4e4;flex:none}
.typesel .caret{margin-left:53px}
.inst{margin:0 3px;height:20px;display:flex;align-items:center;border-left:1px solid #777;background:#f0f0f0;padding-left:1px;flex:none}
.instsel{width:157px;height:17px;background:#e6e6e6;border:1px solid #bbb;display:flex;align-items:center;justify-content:space-between;padding:0 2px;white-space:nowrap;flex:none}
.instsel em,.combo em{font-size:8px;color:#777}
.typebtn{display:flex;align-items:center;gap:2px;margin-left:4px;color:#b0b0b0;white-space:nowrap}
.ptable{margin:0 5px 0 3px;border-left:1px solid #777;background:#fff;flex:1;min-height:0;padding-left:1px}
.grp{height:13.680px;background:#dcdcdc;display:flex;align-items:center;justify-content:space-between;padding:0 6px 0 1px}
.grp b{font-size:9px;color:#333;transform:rotate(-90deg);display:block}
.pr{display:grid;grid-template-columns:117px 116px 10px;height:13.680px;border-bottom:1px dotted #aaa;align-items:stretch;line-height:12.500px;white-space:nowrap}
.pr span:first-child{padding-left:5px;border-right:1px solid #e2e2e2}
.pr span:nth-child(2){padding-left:1px;border-right:1px dotted #aaa}
.pr .sel{border:1px solid #222!important;background:#fff;margin-top:-1px}
.pr .thumbv{background:#e4e4e4;border:1px solid #bbb;margin:1px 1px 1px 0}
.pfoot{margin:0 5px 0 3px;height:21px;display:flex;align-items:center;justify-content:space-between;border-left:1px solid #777;background:#f0f0f0;padding:0 2px;flex:none}
.pfoot a{color:#2d6fb5;text-decoration:underline;white-space:nowrap}
.apply{width:55px;height:17px;background:#dcdcdc;border:1px solid #d0d0d0;color:#9b9b9b;text-align:center;line-height:15px}
.browser{display:flex;flex-direction:column;min-height:0;min-width:0}
.bbody{flex:1;min-height:0;display:grid;grid-template-columns:234px 11px;margin:1px 5px 0 3px;background:#fff;border-left:1px solid #777;overflow:hidden}
.tree{padding-top:3px;background:linear-gradient(#aaa 50%,transparent 50%) 21px 0/1px 2px repeat-y;white-space:nowrap;overflow:hidden}
.tr{height:13.680px;display:flex;align-items:center}
.exp{width:7px;height:7px;border:1px solid #999;background:#f5f5f5;position:relative;flex:none}
.exp.minus::after,.exp.plus::after{content:"";position:absolute;left:1px;top:2px;width:3px;height:1px;background:#444}
.exp.plus::before{content:"";position:absolute;left:2px;top:1px;width:1px;height:3px;background:#444}
.root{padding-left:3px}
.rooticon{width:12px;height:12px;margin-left:5px;background:#fff}
.hl{background:#e6e6e6;padding:1px 2px;line-height:11px;margin-left:2px}
.l1{padding-left:18px}
.elb{width:9px;border-top:1px dotted #999;margin-right:1px;flex:none}
.sub{background:linear-gradient(#aaa 50%,transparent 50%) 37px 0/1px 2px repeat-y}
.l2{padding-left:37px}
.l2 .elb{width:11px;margin-right:3px}
.cur3d{font-weight:700}
.vbar,.vvbar,.tvbar{display:flex;flex-direction:column;background:#f0f0f0}
.up,.down{display:block;height:14px;flex:none;position:relative}
.up::after,.down::after{content:"";position:absolute;left:50%;width:5px;height:5px;border-left:1px solid #555;border-top:1px solid #555;margin-left:-2.500px}
.up::after{top:6px;transform:rotate(45deg)}
.down::after{top:2px;transform:rotate(225deg)}
.th{display:block;background:#cdcdcd;flex:none}
.tb{height:21px;margin-top:4px}
.vbar .down,.vvbar .down,.tvbar .down{margin-top:auto}

/* view */
.right{display:grid;grid-template-rows:295px 13px 257px;min-height:0;background:#d6d6d6}
.viewrow{display:grid;grid-template-columns:1010px 1fr;overflow:hidden;padding-right:3px;background:#f4f4f4;height:295px;border-top:1px solid #777}
.canvas{width:1010px;height:295px}
.canvas text{font-family:"Open Sans",sans-serif;fill:#777}
.vvbar{background:#f3f3f3}
.tv{height:13px;margin-top:126px;background:#d4d4d4}
.viewbar{display:flex;align-items:center;background:#eeeeee;height:13px}
.scale{margin-left:20px;width:39px;white-space:nowrap}
.vicons{display:flex;width:220px;flex:none}
.vi{width:13px;height:11px;margin-right:2.700px;flex:none}
.lt{margin-left:9px;font-size:13px;line-height:10px}
.hthumb{width:12px;height:13px;background:#d4d4d4;margin-left:349px;flex:none}
.rt{margin-left:349px;font-size:13px;line-height:10px}
.abz{margin-top:5px;display:flex;flex-direction:column;min-height:0;height:252px}
.abzhead{display:flex;justify-content:space-between;align-items:center;height:14px;background:#ccd7e5;border-bottom:1px solid #555;padding:0 6px 0 2px;box-sizing:content-box}
.abzhead b{font-size:9px;color:#222}
.abzbody{flex:1;min-height:0;background:#fff;display:grid;grid-template-columns:1003px 12px;padding-bottom:7px;overflow:hidden}
.tablewrap{position:relative;overflow:hidden;display:flex;flex-direction:column;min-height:0}
.thead{height:24px;flex:none;margin-left:7px;padding-left:2px;border-bottom:1px solid #bbb;display:flex;align-items:flex-end;padding-bottom:3px}
.tname{width:919px;white-space:nowrap;font-weight:500}
.thf{width:36px;display:flex;align-items:center;white-space:nowrap;justify-content:flex-end}
.tha{width:36px;margin-left:1px;display:flex;align-items:center;white-space:nowrap;justify-content:flex-end}
.fi{width:7px;height:7px;flex:none}
.tbody{flex:1;min-height:0;overflow:hidden;padding-top:2px}
.r{display:flex;height:12.150px;align-items:center;white-space:nowrap;letter-spacing:-.125px}
.n{margin-left:19px;width:922px;overflow:hidden;line-height:12px;flex:none}
.f{width:24px;text-align:right;flex:none}
.c{margin-left:14px;width:10px;height:10px;border:1px solid #777;background:#fff;flex:none;display:flex;align-items:center;justify-content:center}
.c svg{width:8px;height:8px}
.group .n{margin-left:10px;width:931px;display:flex;align-items:center;font-weight:500}
.chev{width:5px;height:5px;border-right:1.500px solid #333;border-bottom:1.500px solid #333;transform:rotate(45deg);margin:-2px 4px 0 2px;flex:none}
.tt{height:32px;margin-top:10px}
.tvbar{margin-top:9px}
.mouse{position:absolute;left:483px;top:24px;width:14px;height:19px}

/* status */
.status{display:flex;align-items:center;background:#d8d8d8;border-top:1px solid #c4c4c4;height:21px}
.stext{margin-left:4px;width:443px;white-space:nowrap;overflow:hidden;flex:none;letter-spacing:-.1px}
.st-ws{margin-left:2px}
.combo{height:15px;background:#fff;border:1px solid #e0e0e0;display:flex;align-items:center;justify-content:space-between;padding:0 3px 0 1px;color:#aaa;flex:none}
.c1{width:157px;margin-left:5px}
.c2{width:156px;margin-left:7px}
.zero{margin-left:3px;width:28px;flex:none}
.st-vorl{margin-left:4px}
.st-right{display:flex;align-items:center;gap:6px;margin-left:auto;margin-right:62px}
.forty{margin-left:-6px}
```
